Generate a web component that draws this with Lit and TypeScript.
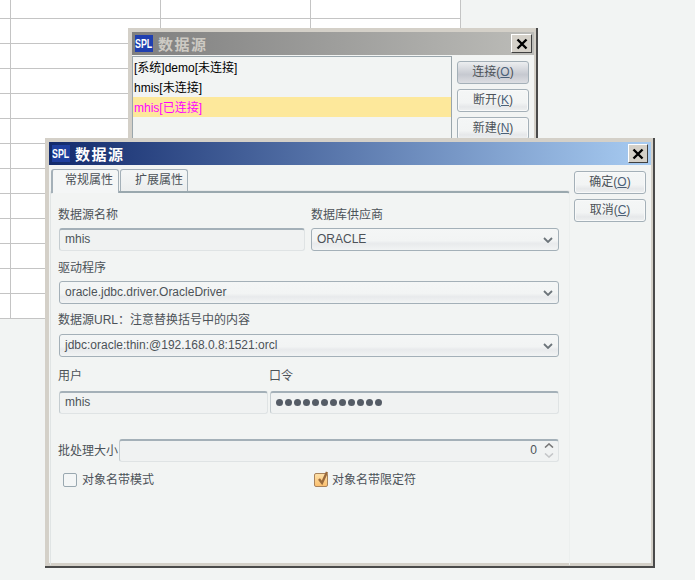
import { LitElement, html, css, svg } from "lit";
import { customElement } from "lit/decorators.js";

const closeIcon = svg`<svg width="12" height="12" viewBox="0 0 12 12"><path d="M1.5 1.5 L10.5 10.5 M10.5 1.5 L1.5 10.5" stroke="#000" stroke-width="2.4" fill="none"/></svg>`;
const chevron = svg`<svg class="chev" width="10" height="6" viewBox="0 0 10 6"><path d="M1 1 L5 5 L9 1" stroke="#6c747a" stroke-width="1.8" fill="none"/></svg>`;
const btn = (t: string, k: string, pressed = false) => html`<div class="btn ${pressed ? "pressed" : ""}">${t}(<u>${k}</u>)</div>`;
const dropdown = (t: string) => html`<div class="field dd">${t}<span class="grow"></span>${chevron}</div>`;
const logo = html`<div class="logo"><span>SPL</span></div>`;

@customElement("app-root")
export class AppRoot extends LitElement {
  static styles = css`
    :host { display: block; position: relative; width: 695px; height: 580px; overflow: hidden; background: #f2f4f3;
      font-family: "Liberation Sans", "Noto Sans CJK SC", sans-serif; font-size: 12px; color: #4c5258; }
    .sheet { display: grid; grid-template-columns: 11px 150px 150px 150px; grid-auto-rows: 25px; width: 461px; margin-top: -6px; }
    .cell { background: #fff; border-right: 1px solid #c4c4c4; border-bottom: 1px solid #c4c4c4; }
    .win { position: absolute; box-sizing: border-box; background: #f2f4f3; display: flex; flex-direction: column;
      border: 4px solid #d4d0c8; border-bottom-width: 5px; }
    .win::after { content: ""; position: absolute; inset: -4px -4px -5px -4px; pointer-events: none;
      border-right: 2px solid #4a4a4a; border-bottom: 2px solid #4a4a4a; }
    .w1 { left: 128px; top: 28px; width: 410px; height: 180px; }
    .w2 { left: 45px; top: 138px; width: 610px; height: 430px; }
    .title { flex: none; height: 23px; display: flex; align-items: center; padding-left: 3px; padding-right: 2px; gap: 5px; }
    .w1 .title { background: linear-gradient(90deg, #7f7f7f, #bcbcb8); color: #cdcac3; }
    .w2 .title { background: linear-gradient(90deg, #122a6c, #a8ccf2); color: #fff; padding-right: 3px; }
    .title b { font-size: 15px; letter-spacing: 1.5px; flex: 1; }
    .logo { width: 18px; height: 17px; background: #1f3fb0; color: #fff; font-size: 13px; font-weight: 700; line-height: 17px; display: flex; justify-content: center; overflow: hidden; }
    .logo span { display: block; transform: scaleX(.68); }
    .w2 .logo { background: #1f3f9e; }
    .close { width: 21px; height: 19px; box-sizing: border-box; background: #d4d0c8; display: flex; align-items: center; justify-content: center;
      border: 1px solid; border-color: #fff #404040 #404040 #fff; }
    .w2 .close { width: 20px; }
    .w1 .main { flex: 1; display: flex; }
    .list { width: 320px; box-sizing: border-box; border-top: 1px solid #9aa6ac; border-right: 1px solid #9aa6ac; border-left: 1px solid #9aa6ac; margin-top: 1px; color: #000; }
    .row { height: 20px; line-height: 22px; padding-left: 1px; }
    .row.on { background: #fde89b; color: #ff00ff; }
    .side { display: flex; flex-direction: column; gap: 5px; padding-left: 5px; }
    .w1 .side { padding-top: 6px; }
    .btn { width: 72px; height: 23px; box-sizing: border-box; border: 1px solid #a4b0b8; border-radius: 3px; text-align: center; line-height: 21px;
      background: linear-gradient(#f4f6f6 0, #f2f4f4 60%, #e6e8ea 80%, #eef0f0 100%); color: #4c5258; box-shadow: inset 0 0 0 1px #f8f9f9; }
    .btn.pressed { background: linear-gradient(#eceef0, #c6c9d0 60%, #dcdee2); box-shadow: none; }
    .btn u { color: #4a6078; }
    .w2 .body { flex: 1; display: flex; padding-left: 1px; }
    .w2 .left { width: 520px; flex: none; }
    .w2 .side { padding-top: 6px; padding-left: 4px; }
    .tabs { display: flex; gap: 1px; height: 24px; padding: 4px 0 0 1px; margin-bottom: -2px; }
    .tab { box-sizing: border-box; width: 68px; height: 22px; padding-left: 14px; line-height: 21px; border: 1px solid #a4b0b8; border-bottom: none; border-radius: 3px 3px 0 0; background: linear-gradient(#f4f6f6, #eceeee); }
    .tab.on { height: 24px; background: #f4f6f6; position: relative; z-index: 1; border-left: 2px solid #a4b0b8; padding-left: 12px; }
    .pane { box-sizing: border-box; height: 374px; border-top: 2px solid #9aa8ae; border-right: 1px solid #ecefee; border-left: 1px solid #e0e4e4; border-radius: 3px 3px 0 0; padding: 13px 10px 0 7px; box-shadow: 0 -1px 0 #e8eaea; }
    .lab { height: 18px; line-height: 18px; white-space: nowrap; }
    .rowf { display: flex; }
    .field { box-sizing: border-box; height: 23px; line-height: 20px; padding-left: 5px; padding-bottom: 2px; border: 1px solid #dfe3e4; border-top: 2px solid #a4b0b8; border-left: 1px solid #c4ccd0; border-radius: 3px; background: #f0f2f2; display: flex; align-items: center; }
    .dd { background: linear-gradient(#f4f6f6 0, #f2f4f4 55%, #e8eaec 70%, #f2f4f4 100%); border: 1px solid #a4b0b8; padding-right: 5px; padding-bottom: 1px; }
    .dd .chev { margin-top: 1px; }
    .grow { flex: 1; }
    .chev { flex: none; }
    .col { display: flex; flex-direction: column; }
    .indent { margin-left: 1px; }
    .g4 { gap: 4px; } .g5 { gap: 5px; } .g6 { gap: 6px; }
    .c1 { width: 253px; } .f1 { width: 246px; } .f2 { width: 248px; }
    .c3 { width: 211px; } .f3 { width: 209px; } .f4 { width: 289px; }
    .mb7 { margin-bottom: 7px; } .mb8 { margin-bottom: 8px; } .mb10 { margin-bottom: 10px; }
    .batch { margin-top: 25px; align-items: center; }
    .batch .lab { width: 61px; }
    .num { flex: 1; justify-content: flex-end; padding-right: 4px; }
    .spin { display: flex; flex-direction: column; gap: 5px; margin-left: 7px; }
    .checks { margin-top: 9px; padding-left: 5px; }
    .chk { display: flex; align-items: center; gap: 5px; line-height: 18px; }
    .chk.a { width: 251px; }
    .chk.b { gap: 4px; }
    .box { width: 14px; height: 14px; box-sizing: border-box; border: 1px solid #9aa8b0; border-radius: 2px; background: #f4f6f6; }
    .box.on { background: linear-gradient(#fde0a8, #fbc070); border-color: #a8825c; position: relative; }
    .tick { position: absolute; left: 1px; top: -4px; }
    .dots { display: flex; gap: 2px; }
    .dots i { width: 7px; height: 7px; border-radius: 50%; background: #555c66; display: block; }
  `;

  render() {
    const cells = Array.from({ length: 13 * 4 }, () => html`<div class="cell"></div>`);
    return html`
      <div class="sheet">${cells}</div>

      <div class="win w1">
        <div class="title">${logo}<b>数据源</b><div class="close">${closeIcon}</div></div>
        <div class="main">
          <div class="list">
            <div class="row">[系统]demo[未连接]</div>
            <div class="row">hmis[未连接]</div>
            <div class="row on">mhis[已连接]</div>
          </div>
          <div class="side">${btn("连接", "O", true)}${btn("断开", "K")}${btn("新建", "N")}</div>
        </div>
      </div>

      <div class="win w2">
        <div class="title">${logo}<b>数据源</b><div class="close">${closeIcon}</div></div>
        <div class="body">
          <div class="left">
            <div class="tabs"><div class="tab on">常规属性</div><div class="tab">扩展属性</div></div>
            <div class="pane">
              <div class="rowf mb8">
                <div class="col c1 g4"><div class="lab">数据源名称</div><div class="field f1 indent">mhis</div></div>
                <div class="col g4"><div class="lab">数据库供应商</div><div class="f2">${dropdown("ORACLE")}</div></div>
              </div>
              <div class="col g4 mb7"><div class="lab">驱动程序</div><div class="indent">${dropdown("oracle.jdbc.driver.OracleDriver")}</div></div>
              <div class="col g5 mb10"><div class="lab">数据源URL：注意替换括号中的内容</div><div class="indent">${dropdown("jdbc:oracle:thin:@192.168.0.8:1521:orcl")}</div></div>
              <div class="rowf">
                <div class="col c3 g6"><div class="lab">用户</div><div class="field f3 indent">mhis</div></div>
                <div class="col g6"><div class="lab">口令</div><div class="field f4 indent"><div class="dots">${Array.from({ length: 12 }, () => html`<i></i>`)}</div></div></div>
              </div>
              <div class="rowf batch">
                <div class="lab">批处理大小</div>
                <div class="field num">0<div class="spin">
                  <svg width="10" height="5" viewBox="0 0 10 5"><path d="M1 4.5 L5 1 L9 4.5" stroke="#777" stroke-width="1.6" fill="none"/></svg>
                  <svg width="10" height="5" viewBox="0 0 10 5"><path d="M1 .5 L5 4 L9 .5" stroke="#c4c6c8" stroke-width="1.6" fill="none"/></svg>
                </div></div>
              </div>
              <div class="rowf checks">
                <div class="chk a"><div class="box"></div>对象名带模式</div>
                <div class="chk b"><div class="box on"><svg class="tick" width="13" height="17" viewBox="0 0 13 17"><path d="M3 9 L6 13 L11 2" stroke="#9a6a3c" stroke-width="2.4" fill="none"/></svg></div>对象名带限定符</div>
              </div>
            </div>
          </div>
          <div class="side">${btn("确定", "O")}${btn("取消", "C")}</div>
        </div>
      </div>
    `;
  }
}
